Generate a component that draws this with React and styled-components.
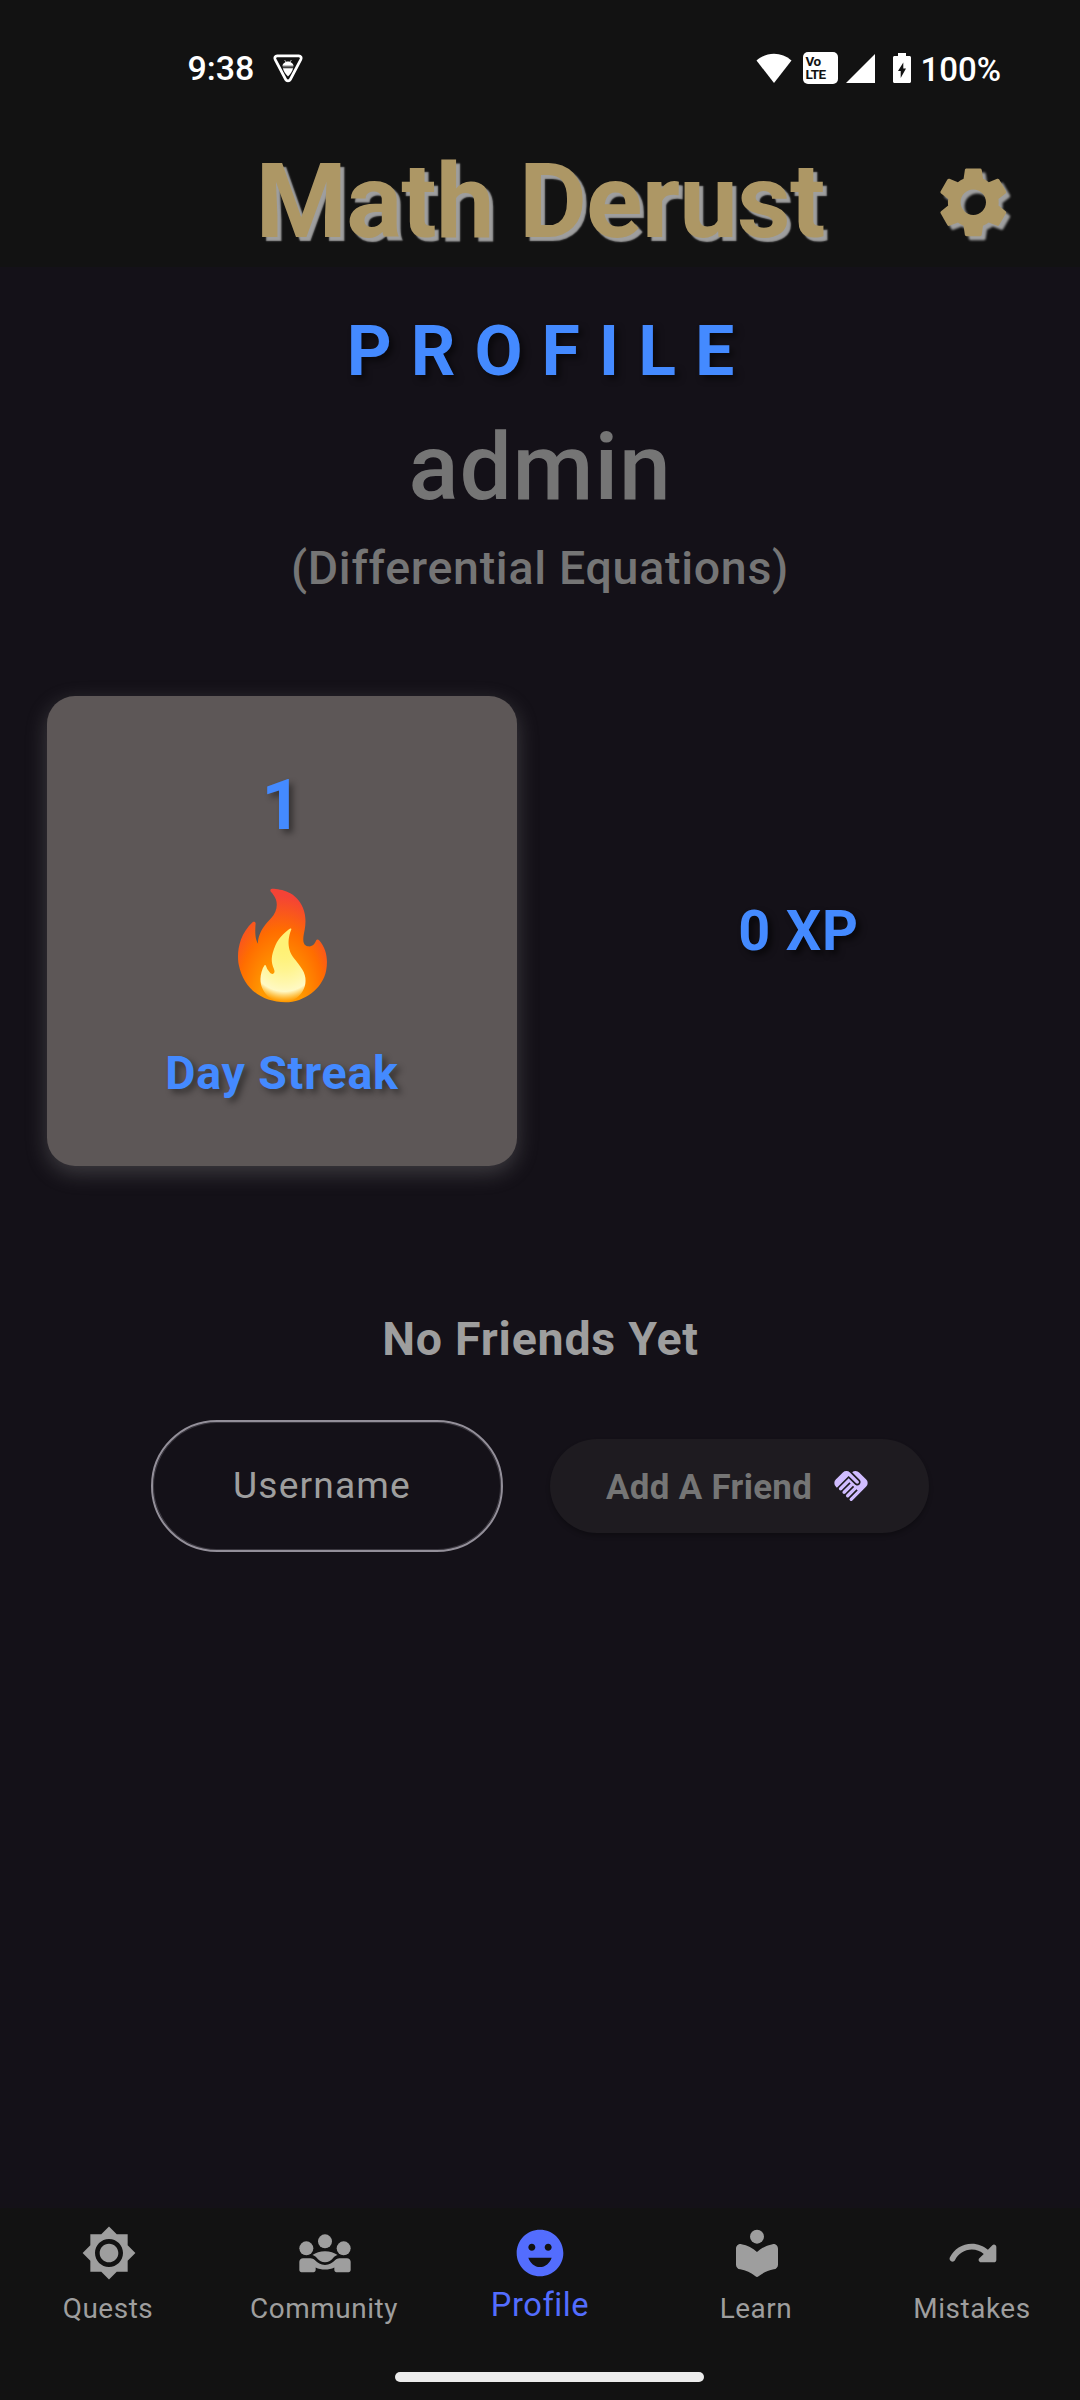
import React from "react";
import styled, { createGlobalStyle, css } from "styled-components";
import { MdSettings, MdBrightness7, MdEmojiEmotions, MdHandshake } from "react-icons/md";

const GlobalStyle = createGlobalStyle`
  * { box-sizing: border-box; }
  body { margin: 0; background: #141118; }
`;

const Screen = styled.div`
  width: 1080px;
  height: 2400px;
  display: flex;
  flex-direction: column;
  background: #141118;
  font-family: Roboto, "Noto Sans", sans-serif;
  overflow: hidden;
  white-space: nowrap;
`;

const StatusBar = styled.div`
  height: 136px;
  display: flex;
  align-items: center;
  justify-content: space-between;
  padding: 0 79px 0 187.5px;
  background: #121212;
  color: #fff;
`;

const StatusGroup = styled.div`
  display: flex;
  align-items: center;
  svg { display: block; }
`;

const Clock = styled.span`
  font-size: 34px;
  font-weight: 500;
  line-height: 40px;
  margin-right: 18px;
`;

const BatteryText = styled.span`
  font-size: 33px;
  font-weight: 500;
  line-height: 40px;
  padding-top: 3px;
  margin-left: 9px;
`;

const VolteBadge = styled.span`
  width: 35px;
  height: 32px;
  margin: 0 8px 0 11px;
  padding: 3px 0 0 2px;
  border-radius: 5px;
  background: #fff;
  color: #121212;
  font-size: 13.5px;
  font-weight: 700;
  line-height: 13px;
  letter-spacing: -0.5px;
  display: flex;
  flex-direction: column;
`;

const Header = styled.header`
  height: 131px;
  display: grid;
  grid-template-columns: 212px 1fr 212px;
  align-items: center;
  justify-items: center;
  background: #121212;
  color: #ad9765;
`;

const AppTitle = styled.h1`
  grid-column: 2;
  margin: 0;
  font-size: 104.6px;
  font-weight: 700;
  line-height: 122px;
  letter-spacing: -0.8px;
  text-shadow: 4px 4px 1.5px #9e9e9e;
`;

const SettingsButton = styled.button`
  border: 0;
  padding: 1px 0 0;
  margin-right: 2px;
  background: none;
  color: inherit;
  display: flex;
  font-size: 84.6px;
  filter: drop-shadow(4px 4px 0.8px #9e9e9e);
`;

const Main = styled.main`
  flex: 1;
  display: flex;
  flex-direction: column;
  align-items: center;
  padding-top: 43px;
`;

const Heading = styled.h2`
  margin: 0;
  padding-left: 20px;
  font-size: 69.8px;
  font-weight: 700;
  line-height: 82px;
  letter-spacing: 19px;
  color: #448aff;
  text-shadow: 4px 4px 6px rgba(0, 0, 0, 0.5);
`;

const UserName = styled.div`
  margin-top: 21px;
  font-size: 93px;
  font-weight: 500;
  line-height: 110px;
  letter-spacing: 0.8px;
  color: #757575;
`;

const Course = styled.div`
  margin-top: 17px;
  font-size: 46.5px;
  font-weight: 500;
  line-height: 56px;
  letter-spacing: 0.71px;
  color: #757575;
`;

const Stats = styled.section`
  width: 100%;
  margin-top: 100px;
  padding: 0 47px;
  display: grid;
  grid-template-columns: 470px 470px;
  justify-content: space-between;
  align-items: center;
`;

const StreakCard = styled.div`
  height: 470px;
  padding-top: 68px;
  display: flex;
  flex-direction: column;
  align-items: center;
  gap: 39px;
  border-radius: 28px;
  background: #5d5757;
  box-shadow: 0 7px 21px rgba(158, 158, 158, 0.3);
  svg { display: block; }
`;

const sizes = {
  large: css`font-size: 69.8px; line-height: 82px;`,
  medium: css`font-size: 55.8px; line-height: 66px; padding-left: 1px;`,
  small: css`font-size: 46.5px; line-height: 56px;`,
};

const StatText = styled.span`
  ${(p) => sizes[p.$size]}
  font-weight: 700;
  letter-spacing: 0.8px;
  text-align: center;
  color: #448aff;
  text-shadow: 4px 4px 6px ${(p) => (p.$onCard ? "rgba(0, 0, 0, 0.42)" : "rgba(0, 0, 0, 0.6)")};
`;

const FriendsTitle = styled.h3`
  margin: 145px 0 0;
  padding-left: 1px;
  font-size: 46.5px;
  font-weight: 700;
  line-height: 56px;
  letter-spacing: 0.77px;
  color: #9e9e9e;
`;

const FriendForm = styled.div`
  margin-top: 53px;
  display: flex;
  align-items: center;
  gap: 47px;
`;

const UserField = styled.div`
  width: 352px;
  height: 132px;
  padding: 0 0 2px 80px;
  display: flex;
  align-items: center;
  border: 2px solid #938f99;
  border-radius: 66px;
  box-shadow: inset 0 0 0 1px rgba(147, 143, 153, 0.3);
  font-size: 37.2px;
  letter-spacing: 1.16px;
  color: #9e9e9e;
`;

const AddButton = styled.button`
  width: 379px;
  height: 94px;
  border: 0;
  padding: 0 0 0 56px;
  display: flex;
  align-items: center;
  border-radius: 47px;
  background: #1e1b20;
  box-shadow: 0 3px 4px rgba(0, 0, 0, 0.25);
  font-family: inherit;
  font-size: 34.9px;
  font-weight: 700;
  letter-spacing: 0.33px;
  color: #757575;
  svg {
    margin-left: 18.5px;
    font-size: 40px;
    color: #d0bcff;
  }
`;

const AddLabel = styled.span`
  padding-top: 2px;
`;

const NavBar = styled.nav`
  height: 192px;
  background: #121212;
  display: flex;
  flex-direction: column;
  align-items: center;
`;

const Tabs = styled.div`
  width: 100%;
  height: 164px;
  display: grid;
  grid-template-columns: repeat(5, 1fr);
`;

const Tab = styled.div`
  padding-top: 17px;
  display: flex;
  flex-direction: column;
  align-items: center;
  color: ${(p) => (p.$active ? "#536dfe" : "#9e9e9e")};
  svg {
    display: block;
    width: 56px;
    height: 56px;
    margin-left: ${(p) => (p.$active ? "0" : "1px")};
    fill: currentColor;
  }
`;

const TabLabel = styled.span`
  margin-top: ${(p) => (p.$active ? "4px" : "11px")};
  font-size: ${(p) => (p.$active ? "32.6px" : "27.9px")};
  line-height: ${(p) => (p.$active ? "40px" : "34px")};
  letter-spacing: ${(p) => (p.$active ? "0.6px" : "0.55px")};
`;

const HomeBar = styled.div`
  width: 309px;
  height: 10px;
  margin-left: 19px;
  border-radius: 5px;
  background: #ececec;
`;

function BeeShieldIcon() {
  return (
    <svg width="32" height="32" viewBox="0 0 32 32">
      <path d="M5.200 3.800h21.600c2 0 3 1.900 2.100 3.600L18.300 27.500c-1 1.900-3.600 1.900-4.600 0L3.100 7.400c-.9-1.700.1-3.600 2.100-3.600z" fill="none" stroke="#fff" strokeWidth="2.700" />
      <path d="M12.600 8l1.400 2M19.400 8l-1.400 2" stroke="#bbb" strokeWidth="1" />
      <path d="M10.400 13.700c.2-1.600 1.400-2.700 2.600-3.300 1.200-1.300 4.800-1.300 6 0 1.200.6 2.400 1.700 2.600 3.300z" fill="#fff" />
      <path d="M10.600 14.800h10.800" stroke="#888" strokeWidth="1.200" />
      <path d="M10.900 16.200h10.200c-.6 3-3 6.200-5.100 8.400-2.100-2.200-4.500-5.400-5.100-8.400z" fill="#fff" />
    </svg>
  );
}

function WifiIcon() {
  return (
    <svg width="36" height="30" viewBox="0 0 36 30">
      <path d="M18 30L.5 7.500C5.500 3 11.500.700 18 .700S30.500 3 35.500 7.500z" fill="#fff" />
    </svg>
  );
}

function SignalIcon() {
  return (
    <svg width="29" height="29" viewBox="0 0 29 29">
      <path d="M29 0v29H0z" fill="#fff" />
    </svg>
  );
}

const BatterySvg = styled.svg`
  margin-left: 18px;
`;

function BatteryIcon() {
  return (
    <BatterySvg width="18" height="30" viewBox="0 0 18 30">
      <path d="M5 0h8v3h3.500c.8 0 1.500.7 1.500 1.500v24c0 .8-.7 1.500-1.500 1.500h-15C.7 30 0 29.300 0 28.500v-24C0 3.700.7 3 1.500 3H5z" fill="#fff" />
      <path d="M10.300 9.500v6H13L7.700 25v-7H5z" fill="#121212" />
    </BatterySvg>
  );
}

function FlameIcon() {
  return (
    <svg width="121" height="121" viewBox="0 0 128 128">
      <defs>
        <radialGradient id="flameOuter" cx="68.884" cy="124.296" r="70.587" gradientTransform="matrix(-1 -.00434 -.00713 1.6408 131.986 -79.345)" gradientUnits="userSpaceOnUse">
          <stop offset=".314" stopColor="#ff9800" />
          <stop offset=".662" stopColor="#ff6d00" />
          <stop offset=".972" stopColor="#f44336" />
        </radialGradient>
        <radialGradient id="flameInner" cx="64.921" cy="54.062" r="73.86" gradientTransform="matrix(-.0101 .9999 .7525 .0076 26.154 -11.267)" gradientUnits="userSpaceOnUse">
          <stop offset=".214" stopColor="#fff176" />
          <stop offset=".328" stopColor="#fff27d" />
          <stop offset=".487" stopColor="#fff48f" />
          <stop offset=".672" stopColor="#fff7ad" />
          <stop offset=".793" stopColor="#fff9c4" />
          <stop offset=".822" stopColor="#fff8bd" stopOpacity=".804" />
          <stop offset=".863" stopColor="#fff6ab" stopOpacity=".529" />
          <stop offset=".91" stopColor="#fff38d" stopOpacity=".209" />
          <stop offset=".941" stopColor="#fff176" stopOpacity="0" />
        </radialGradient>
      </defs>
      <path fill="url(#flameOuter)" d="M35.56 40.73c-.57 6.08-.97 16.84 2.62 21.42c0 0-1.69-11.82 13.46-26.65c6.1-5.97 7.51-14.09 5.38-20.18c-1.21-3.45-3.42-6.3-5.34-8.29c-1.12-1.17-.26-3.1 1.37-3.03c9.86.44 25.84 3.18 32.63 20.22c2.98 7.48 3.2 15.21 1.78 23.07c-.9 5.02-4.1 16.18 3.2 17.55c5.21.98 7.73-3.16 8.86-6.14c.47-1.24 2.1-1.55 2.98-.56c8.8 10.01 9.55 21.8 7.73 31.95c-3.52 19.62-23.39 33.9-43.13 33.9c-24.66 0-44.29-14.11-49.38-39.65c-2.05-10.31-1.01-30.71 14.89-45.11c1.18-1.08 3.11-.12 2.95 1.5z" />
      <path fill="url(#flameInner)" d="M76.11 77.42c-9.09-11.7-5.02-25.05-2.79-30.37c.3-.7-.5-1.36-1.13-.93c-3.91 2.66-11.92 8.92-15.65 17.73c-5.05 11.91-4.69 17.74-1.7 24.86c1.8 4.29-.29 5.2-1.34 5.36c-1.02.16-1.96-.52-2.71-1.23a16.09 16.09 0 0 1-4.44-7.6c-.16-.62-.97-.79-1.34-.28c-2.8 3.87-4.25 10.08-4.32 14.47C40.47 113 51.68 124 65.24 124c17.09 0 29.54-18.9 19.72-34.7c-2.85-4.6-5.53-7.61-8.85-11.88z" />
    </svg>
  );
}

function CommunityIcon() {
  return (
    <svg viewBox="0 0 24 24">
      <circle cx="4" cy="10" r="3" />
      <circle cx="20" cy="10" r="3" />
      <circle cx="12" cy="7" r="3" />
      <path d="M6.600 12.900C8 11.800 9.900 11.200 12 11.200s4 .6 5.400 1.700c-.9.2-1.400.7-2 1.300-1 1-2 1.800-3.400 1.800s-2.400-.8-3.400-1.800c-.6-.6-1.100-1.100-2-1.300z" />
      <path d="M1 15.800c0-.9.700-1.600 1.600-1.600h3.200c.7 0 1.300.3 1.800.8 1.300 1.300 2.500 2.100 4.400 2.100s3.100-.8 4.400-2.100c.5-.5 1.100-.8 1.800-.8h3.200c.9 0 1.600.7 1.600 1.600v3.500c0 .5-.4.900-.9.900h-5.200c-.5 0-.9-.4-.9-.9v-1.100c-1.200.6-2.500.9-4 .9s-2.800-.3-4-.9v1.100c0 .5-.4.900-.9.900H1.900c-.5 0-.9-.4-.9-.9z" />
    </svg>
  );
}

function LearnIcon() {
  return (
    <svg viewBox="0 0 24 24">
      <circle cx="12" cy="5" r="3" />
      <path d="M12 11.550c-1.820-1.700-4.120-2.890-6.680-3.350C4.110 7.990 3 8.950 3 10.180v6.820c0 1.040.77 1.850 1.770 2.010 2.440.39 4.700 1.450 6.560 2.950.4.4.94.4 1.340 0 1.860-1.500 4.120-2.560 6.560-2.950 1-.16 1.770-.97 1.770-2.010v-6.820c0-1.230-1.110-2.190-2.320-1.980-2.560.46-4.860 1.650-6.680 3.350z" />
    </svg>
  );
}

function RedoIcon() {
  return (
    <svg viewBox="0 0 24 24">
      <path d="M18.400 10.600C16.550 8.990 14.150 8 11.500 8c-4.160 0-7.740 2.420-9.440 5.930-.32.67.04 1.470.75 1.710.59.2 1.230-.08 1.500-.64 1.300-2.660 4.030-4.500 7.190-4.500 1.950 0 3.730.72 5.120 1.880l-1.910 1.910c-.63.63-.19 1.710.7 1.710H21c.55 0 1-.45 1-1V9.410c0-.89-1.080-1.340-1.710-.71l-1.890 1.900z" />
    </svg>
  );
}

const TABS = [
  { label: "Quests", Icon: MdBrightness7 },
  { label: "Community", Icon: CommunityIcon },
  { label: "Profile", Icon: MdEmojiEmotions, active: true },
  { label: "Learn", Icon: LearnIcon },
  { label: "Mistakes", Icon: RedoIcon },
];

export default function App() {
  return (
    <Screen>
      <GlobalStyle />
      <StatusBar>
        <StatusGroup>
          <Clock>9:38</Clock>
          <BeeShieldIcon />
        </StatusGroup>
        <StatusGroup>
          <WifiIcon />
          <VolteBadge>
            <span>Vo</span>
            <span>LTE</span>
          </VolteBadge>
          <SignalIcon />
          <BatteryIcon />
          <BatteryText>100%</BatteryText>
        </StatusGroup>
      </StatusBar>
      <Header>
        <AppTitle>Math Derust</AppTitle>
        <SettingsButton aria-label="Settings">
          <MdSettings />
        </SettingsButton>
      </Header>
      <Main>
        <Heading>PROFILE</Heading>
        <UserName>admin</UserName>
        <Course>(Differential Equations)</Course>
        <Stats>
          <StreakCard>
            <StatText $size="large" $onCard>1</StatText>
            <FlameIcon />
            <StatText $size="small" $onCard>Day Streak</StatText>
          </StreakCard>
          <StatText $size="medium">0 XP</StatText>
        </Stats>
        <FriendsTitle>No Friends Yet</FriendsTitle>
        <FriendForm>
          <UserField>Username</UserField>
          <AddButton>
            <AddLabel>Add A Friend</AddLabel>
            <MdHandshake />
          </AddButton>
        </FriendForm>
      </Main>
      <NavBar>
        <Tabs>
          {TABS.map(({ label, Icon, active }) => (
            <Tab key={label} $active={active}>
              <Icon />
              <TabLabel $active={active}>{label}</TabLabel>
            </Tab>
          ))}
        </Tabs>
        <HomeBar />
      </NavBar>
    </Screen>
  );
}
